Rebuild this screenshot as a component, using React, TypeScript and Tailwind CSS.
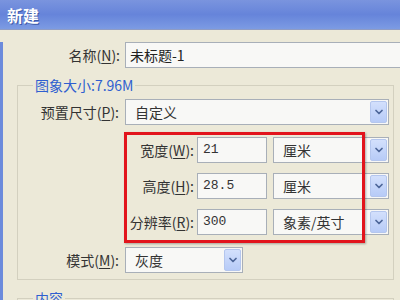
import { ChevronDown } from "lucide-react";

const font = "font-['Noto_Sans_CJK_SC','Noto_Sans',sans-serif]";

const Mnemonic = ({ text, k }: { text: string; k: string }) => (
  <span>
    {text}(<span className="underline underline-offset-2">{k}</span>):
  </span>
);

const DropButton = () => (
  <div className="ml-auto mr-px flex h-[22px] w-[17px] items-center justify-center rounded-[2px] border border-[#b4c6ee] bg-gradient-to-b from-[#d3e0fc] to-[#b7cbf7]">
    <ChevronDown size={12} strokeWidth={3.5} className="text-[#4d6699]" />
  </div>
);

const Select = ({ value, width }: { value: string; width: string }) => (
  <div
    className={`flex h-[26px] ${width} items-center border border-[#a8afb8] bg-[#f8f8f6] pl-[9px] text-[14px] text-[#333]`}
  >
    <span>{value}</span>
    <DropButton />
  </div>
);

const NumInput = ({ value }: { value: string }) => (
  <div className="ml-[3px] flex h-[26px] w-[70px] items-center border border-[#a8afb8] bg-[#f8f8f6] pl-[5px] font-['Liberation_Mono',monospace] text-[13px] text-[#333]">
    {value}
  </div>
);

const SizeRow = ({ label, k, value, unit }: { label: string; k: string; value: string; unit: string }) => (
  <div className="flex h-[26px] items-center">
    <div className="w-[176px] text-right text-[14px] text-[#333]">
      <Mnemonic text={label} k={k} />
    </div>
    <NumInput value={value} />
    <div className="ml-[6px]">
      <Select value={unit} width="w-[116px]" />
    </div>
  </div>
);

export default function App() {
  return (
    <div className={`relative h-[300px] w-[400px] overflow-hidden bg-[#ece9d8] ${font}`}>
      <div className="flex h-[30px] items-center border-b border-[#8f9cc4] bg-gradient-to-b from-[#7a94de] via-[#6684da] to-[#7c9be3] pl-[7px] text-[16px] font-bold text-white [text-shadow:1px_1px_0_#3c5aa8]">
        新建
      </div>

      <div className="border-l-[3px] border-[#6c8bdc] pb-4">
        <div className="mt-[12px] flex h-[26px] items-center">
          <div className="w-[117px] text-right text-[14px] text-[#333]">
            <Mnemonic text="名称" k="N" />
          </div>
          <div className="ml-[5px] flex h-[26px] flex-1 items-center border border-r-0 border-[#a8afb8] bg-[#f8f8f6] pl-[4px] text-[14px] text-[#222]">
            未标题-1
          </div>
        </div>

        <fieldset className="ml-[14px] mt-[8px] w-[377px] border border-[#d3d0bf] pb-[6px]">
          <legend className="ml-[15px] px-[2px] text-[14px] leading-[18px] text-[#2f5fd0]">
            图象大小:7.96M
          </legend>

          <div className="mt-[5px] flex h-[26px] items-center">
            <div className="w-[101px] text-right text-[14px] text-[#333]">
              <Mnemonic text="预置尺寸" k="P" />
            </div>
            <div className="ml-[6px]">
              <Select value="自定义" width="w-[264px]" />
            </div>
          </div>

          <div className="mt-[12px] flex flex-col gap-[10px]">
            <SizeRow label="宽度" k="W" value="21" unit="厘米" />
            <SizeRow label="高度" k="H" value="28.5" unit="厘米" />
            <SizeRow label="分辨率" k="R" value="300" unit="象素/英寸" />
          </div>

          <div className="mt-[12px] flex h-[26px] items-center">
            <div className="w-[101px] text-right text-[14px] text-[#333]">
              <Mnemonic text="模式" k="M" />
            </div>
            <div className="ml-[6px]">
              <Select value="灰度" width="w-[118px]" />
            </div>
          </div>
        </fieldset>

        <fieldset className="ml-[14px] mt-[9px] h-[40px] w-[377px] border border-[#d3d0bf]">
          <legend className="ml-[15px] px-[2px] text-[14px] leading-[18px] text-[#2f5fd0]">内容</legend>
        </fieldset>
      </div>

      <div className="absolute left-[124px] top-[132px] h-[111px] w-[241px] border-[3px] border-[#e2141c] shadow-[1px_1px_2px_rgba(0,0,0,0.3)]" />
    </div>
  );
}
